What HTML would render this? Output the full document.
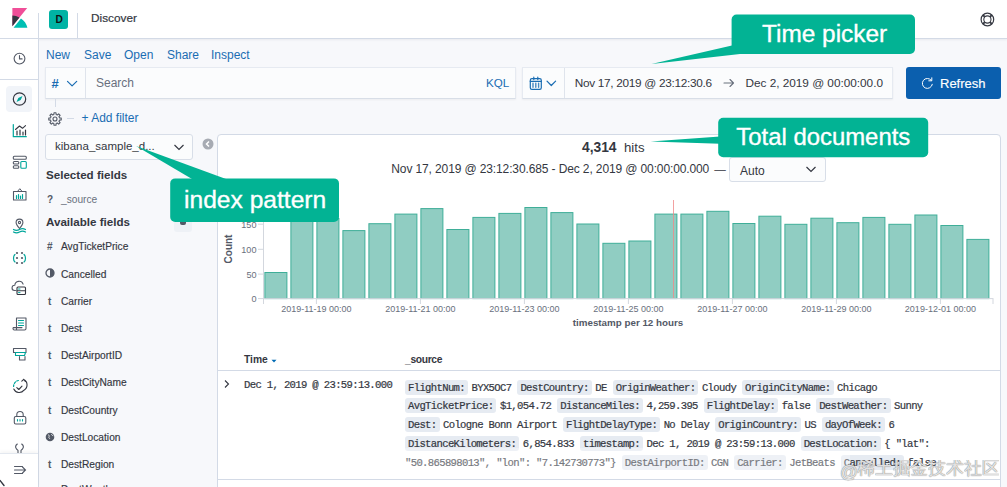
<!DOCTYPE html>
<html><head><meta charset="utf-8">
<style>
*{box-sizing:border-box;margin:0;padding:0}
html,body{width:1007px;height:487px;overflow:hidden}
body{position:relative;background:#f7f8fb;font-family:"Liberation Sans",sans-serif;color:#343741}
.a{position:absolute}
.t{position:absolute;white-space:nowrap;line-height:1}
#hdr{left:0;top:0;width:1007px;height:39px;background:#fff;border-bottom:1px solid #d3dae6;box-shadow:0 1px 2px rgba(60,70,90,.08)}
#nav{left:0;top:39px;width:39px;height:448px;background:#fff;border-right:1px solid #d3dae6}
.vsep{position:absolute;top:13px;width:1px;height:26px;background:#d3dae6}
.lnk{color:#1a6db3;font-size:12px}
.box{position:absolute;background:#fbfcfd;border:1px solid #e6eaf1;border-bottom-color:#d8dee7;box-shadow:0 1px 2px rgba(0,0,0,.05)}
.mono{font-family:"Liberation Mono",monospace}
.co{-webkit-text-stroke:0.35px #fff}
.callout{position:absolute;background:#00b091;border-radius:5px;color:#fff;font-family:"Liberation Sans",sans-serif}
</style></head><body>
<!-- header -->
<div id="hdr" class="a">
  <svg class="a" style="left:10.1px;top:8px" width="19" height="20.3" viewBox="0 0 32 32" preserveAspectRatio="none">
    <path fill="#F04E98" d="M4 0v28.789L28.935.017z"/>
    <path fill="#343741" d="M4 12v16.789l11.906-13.738A24.721 24.721 0 004 12"/>
    <path fill="#00BFB3" d="M18.479 16.664L6.268 30.754l-.377.435h23.45c-1.24-6.28-5.9-11.35-10.862-14.525"/>
  </svg>
  <div class="vsep" style="left:38px"></div>
  <div class="a" style="left:49px;top:10px;width:19px;height:19px;background:#00b3a4;border-radius:3px"></div>
  <div class="t" style="left:55.4px;top:15.4px;font-size:10.2px;font-weight:bold;color:#111">D</div>
  <div class="vsep" style="left:77px"></div>
  <div class="t" style="left:91px;top:13.2px;font-size:11.8px;color:#343741;-webkit-text-stroke:0.2px #343741">Discover</div>
</div>
<!-- left nav -->
<div id="nav" class="a"></div>
<div class="a" style="left:0;top:78.6px;width:38px;height:1px;background:#d3dae6"></div>
<div class="a" style="left:6px;top:86px;width:26px;height:26px;background:#f1f4f9;border-radius:4px"></div>
<svg class="a" style="left:0;top:39px" width="38" height="448" viewBox="0 39 38 448" fill="none" stroke-linecap="round" stroke-linejoin="round">
 <!-- clock -->
 <g stroke="#535966" stroke-width="1.1"><circle cx="19.5" cy="58.6" r="5.4"/><path d="M19.5 55.5v3.4h2.6"/></g>
 <!-- compass -->
 <g stroke="#343741" stroke-width="1.2"><circle cx="19.5" cy="99" r="6.2"/></g>
 <path d="M22.5 96 L18.3 98 L16.5 102 L20.7 100z" fill="#00a69b"/>
 <!-- visualize -->
 <path d="M13.3 124.5v12.2h13" stroke="#00a69b" stroke-width="1.2"/>
 <path d="M15.5 129.5l4-3.5 3 2.3 3-2.6" stroke="#343741" stroke-width="1.1"/>
 <g stroke="#343741" stroke-width="1.2"><path d="M17 131v4M20 130v5M23 132v3M25.5 130v5"/></g>
 <!-- dashboard -->
 <g stroke="#535966" stroke-width="1.1"><rect x="13.3" y="156.3" width="13" height="3" rx="1"/><rect x="13.3" y="161.5" width="5.5" height="2.5" rx="1"/><rect x="13.3" y="165.8" width="5.5" height="2.5" rx="1"/></g>
 <rect x="20.8" y="161.5" width="5.5" height="6.8" rx="1" stroke="#00a69b" stroke-width="1.1"/>
 <!-- canvas -->
 <path d="M13.5 191.5h12.5v8.5h-12.5z" stroke="#535966" stroke-width="1.1"/>
 <path d="M17.5 191.5l2.3-2.8 2.3 2.8" stroke="#535966" stroke-width="1"/>
 <g stroke="#00a69b" stroke-width="1.2"><path d="M16.5 195.5v3M18.5 194.5v4M20.5 196v2.5M22.5 194.5v4"/></g>
 <!-- maps -->
 <g stroke="#535966" stroke-width="1.1"><path d="M19.5 228.5c-2.2-2.6-3.4-4.3-3.4-6a3.4 3.4 0 0 1 6.8 0c0 1.7-1.2 3.4-3.4 6z"/><circle cx="19.5" cy="222.5" r="1.1"/></g>
 <g stroke="#00a69b" stroke-width="1.2"><path d="M13.5 229.5c2 1.2 4 1.2 6 0s4-1.2 6 0M13.5 232c2 1.2 4 1.2 6 0s4-1.2 6 0"/></g>
 <!-- ml -->
 <g fill="#535966" stroke="none"><circle cx="17" cy="253" r="1.1"/><circle cx="22" cy="253" r="1.1"/><circle cx="17" cy="258" r="1.1"/><circle cx="22" cy="258" r="1.1"/><circle cx="17" cy="263" r="1.1"/><circle cx="22" cy="263" r="1.1"/></g>
 <g stroke="#00a69b" stroke-width="1.2"><path d="M15 254.5c-2 1.5-2 6 0 7.5M24 254.5c2 1.5 2 6 0 7.5"/></g>
 <!-- infra -->
 <path d="M15.5 290.5h-1a2.6 2.6 0 0 1 .3-5.2 4.3 4.3 0 0 1 8.3-1.2" stroke="#535966" stroke-width="1.1"/>
 <rect x="17" y="287" width="8.5" height="7.5" rx="1" stroke="#343741" stroke-width="1.1"/>
 <path d="M17 290.8h8.5" stroke="#343741" stroke-width="1.1"/><path d="M18.5 289h1.5M18.5 292.6h1.5" stroke="#00a69b" stroke-width="1"/>
 <!-- logs -->
 <path d="M16.5 329.5v-11.5h9.5v10.5a1.5 1.5 0 0 1-1.5 1.5h-10a1.5 1.5 0 0 1-1.2-2.4h8.7" stroke="#535966" stroke-width="1.1"/>
 <g stroke="#00a69b" stroke-width="1.1"><path d="M18.5 320.5h5M18.5 323h5M18.5 325.5h5"/></g>
 <!-- apm -->
 <path d="M15.5 352.5h-2v-4h12.5v4h-2" stroke="#535966" stroke-width="1.1"/>
 <path d="M15.5 352.5h10l-1 3h-9z" stroke="#00a69b" stroke-width="1.1"/>
 <path d="M19.5 356.5v3.5h5.5v-3.5" stroke="#535966" stroke-width="1.1"/>
 <!-- uptime -->
 <path d="M13.6 386.5a6 6 0 0 1 4.8-6" stroke="#00a69b" stroke-width="1.2" stroke-dasharray="1.8 1.4"/>
 <path d="M16.8 387.6l2 1.9 3.2-3.4" stroke="#343741" stroke-width="1.1"/>
 <path d="M13.8 389a6 6 0 0 0 10.2 1.2a6 6 0 0 0 -.3-10.6M23.7 379.3l-1.9 1.8M23.7 379.3l1.6 2" stroke="#343741" stroke-width="1.1"/>
 <!-- siem lock -->
 <rect x="14.3" y="416.5" width="11.5" height="7.5" rx="1.5" stroke="#535966" stroke-width="1.1"/>
 <path d="M16.8 416.5v-1.8a3.2 3.2 0 0 1 6.4 0v1.8" stroke="#535966" stroke-width="1.1"/>
 <g stroke="#00a69b" stroke-width="1.1"><path d="M17.5 419.5v1.5M20 419.5v1.5M22.5 419.5v1.5"/></g>
 <!-- dev tools -->
 <path d="M17.3 444c-1.6 1.2-2 3.4-.8 5l1.5 1.3v4M21.7 444c1.6 1.2 2 3.4.8 5l-1.5 1.3v4" stroke="#535966" stroke-width="1.1"/>
</svg>
<div class="a" style="left:0;top:453px;width:38px;height:34px;background:#fff;border-top:1px solid #e3e8ef;box-shadow:0 -2px 3px rgba(0,0,0,.04)"></div>
<svg class="a" style="left:0;top:453px" width="38" height="34" viewBox="0 453 38 34" fill="none" stroke="#535966" stroke-width="1.1" stroke-linecap="round">
 <path d="M14.5 466.5h8M14.5 470h10.5M14.5 473.5h8M22.5 467l3 3-3 3"/>
 <path d="M0 480.5l4 5" stroke="#343741" stroke-width="1.4"/>
</svg>

<!-- top menu -->
<div class="t lnk" style="left:46px;top:49px">New</div>
<div class="t lnk" style="left:84px;top:49px">Save</div>
<div class="t lnk" style="left:124px;top:49px">Open</div>
<div class="t lnk" style="left:167px;top:49px">Share</div>
<div class="t lnk" style="left:211px;top:49px">Inspect</div>

<!-- search -->
<div class="box" style="left:45px;top:67px;width:471px;height:32px"></div>
<div class="a" style="left:85px;top:68px;width:1px;height:30px;background:#dfe4ec"></div>
<div class="t lnk" style="left:51.5px;top:76.5px;font-size:13px;font-weight:bold">#</div>
<div class="t" style="left:96px;top:77px;font-size:12px;color:#69707d">Search</div>
<div class="t lnk" style="left:486px;top:77px;font-size:11.6px">KQL</div>

<!-- date picker -->
<div class="box" style="left:522px;top:67px;width:371px;height:32px"></div>
<div class="a" style="left:564px;top:68px;width:1px;height:30px;background:#dfe4ec"></div>
<div class="t" style="left:574.8px;top:77.6px;font-size:11.8px;letter-spacing:-0.3px">Nov 17, 2019 @ 23:12:30.6</div>

<div class="t" style="left:745.5px;top:77.6px;font-size:11.8px;letter-spacing:-0.02px">Dec 2, 2019 @ 00:00:00.0</div>

<!-- refresh -->
<div class="a" style="left:906px;top:67px;width:95px;height:32px;background:#0b5fae;border-radius:3px"></div>
<div class="t" style="left:940px;top:77px;font-size:13px;color:#fff;-webkit-text-stroke:0.15px #fff">Refresh</div>

<!-- filter row -->
<div class="a" style="left:55px;top:99px;width:1px;height:8px;background:#d3dae6"></div>
<svg class="a" style="left:46.7px;top:110.5px" width="16" height="16" viewBox="0 0 16 16" fill="none" stroke="#535966" stroke-width="1.1" stroke-linejoin="round"><path d="M14.22 7.01 L14.22 8.99 L12.46 9.14 L11.96 10.34 L13.10 11.70 L11.70 13.10 L10.34 11.96 L9.14 12.46 L8.99 14.22 L7.01 14.22 L6.86 12.46 L5.66 11.96 L4.30 13.10 L2.90 11.70 L4.04 10.34 L3.54 9.14 L1.78 8.99 L1.78 7.01 L3.54 6.86 L4.04 5.66 L2.90 4.30 L4.30 2.90 L5.66 4.04 L6.86 3.54 L7.01 1.78 L8.99 1.78 L9.14 3.54 L10.34 4.04 L11.70 2.90 L13.10 4.30 L11.96 5.66 L12.46 6.86z"/><circle cx="8" cy="8" r="2"/></svg>
<div class="a" style="left:66.5px;top:118px;width:7.5px;height:1px;background:#d3dae6"></div>
<div class="t lnk" style="left:81.5px;top:111.5px">+ Add filter</div>

<!-- index pattern select -->
<div class="a" style="left:45px;top:134px;width:148px;height:26px;background:#fbfcfd;border:1px solid #d8dee8;border-radius:3px"></div>
<div class="t" style="left:55px;top:140.5px;font-size:11.5px">kibana_sample_d...</div>
<svg class="a" style="left:173px;top:141px" width="12" height="12" viewBox="0 0 12 12" fill="none" stroke="#343741" stroke-width="1.2"><path d="M1.5 4l4.5 4.5 4.5-4.5"/></svg>
<svg class="a" style="left:202px;top:137.5px" width="12" height="12" viewBox="0 0 12 12"><circle cx="6" cy="6" r="5.5" fill="#a7abb3"/><path d="M7 3.5L4.5 6 7 8.5" fill="none" stroke="#fff" stroke-width="1.5"/></svg>

<div class="t" style="left:46px;top:168.5px;font-size:11.6px;font-weight:bold">Selected fields</div>
<div class="t" style="left:47px;top:195px;font-size:10px;font-weight:bold;color:#535966">?</div>
<div class="t" style="left:61px;top:195px;font-size:10.2px;color:#69707d">_source</div>
<div class="t" style="left:46px;top:216px;font-size:11.6px;font-weight:bold">Available fields</div>
<div class="a" style="left:174px;top:214px;width:18px;height:18px;background:#eef1f6;border-radius:3px"></div>
<div class="a" style="left:179.5px;top:222px;width:6px;height:3px;background:#535966;border-radius:0 0 2px 2px"></div>

<div class="t" style="left:47px;top:242px;font-size:10px;font-weight:bold;color:#535966">#</div>
<div class="t" style="left:61px;top:242px;font-size:10.2px;-webkit-text-stroke:0.15px #343741">AvgTicketPrice</div>
<svg class="a" style="left:45px;top:268px" width="10" height="10" viewBox="0 0 10 10"><circle cx="5" cy="5" r="4" fill="none" stroke="#535966" stroke-width="1.3"/><path d="M5 1a4 4 0 0 1 0 8z" fill="#535966"/></svg>
<div class="t" style="left:61px;top:270px;font-size:10.2px;-webkit-text-stroke:0.15px #343741">Cancelled</div>
<div class="t" style="left:48px;top:297px;font-size:10px;font-weight:bold;color:#535966">t</div>
<div class="t" style="left:61px;top:297px;font-size:10.2px;-webkit-text-stroke:0.15px #343741">Carrier</div>
<div class="t" style="left:48px;top:324px;font-size:10px;font-weight:bold;color:#535966">t</div>
<div class="t" style="left:61px;top:324px;font-size:10.2px;-webkit-text-stroke:0.15px #343741">Dest</div>
<div class="t" style="left:48px;top:351px;font-size:10px;font-weight:bold;color:#535966">t</div>
<div class="t" style="left:61px;top:351px;font-size:10.2px;-webkit-text-stroke:0.15px #343741">DestAirportID</div>
<div class="t" style="left:48px;top:378px;font-size:10px;font-weight:bold;color:#535966">t</div>
<div class="t" style="left:61px;top:378px;font-size:10.2px;-webkit-text-stroke:0.15px #343741">DestCityName</div>
<div class="t" style="left:48px;top:406px;font-size:10px;font-weight:bold;color:#535966">t</div>
<div class="t" style="left:61px;top:406px;font-size:10.2px;-webkit-text-stroke:0.15px #343741">DestCountry</div>
<svg class="a" style="left:45px;top:432px" width="10" height="10" viewBox="0 0 10 10"><circle cx="5" cy="5" r="4.3" fill="#535966"/><path d="M3 2.5c1 .5 1.5 1.5 1 2.5-.5.8.5 1.3 1 2M6.5 2c0 1 .8 1.5 1.8 1.8" stroke="#fff" stroke-width=".8" fill="none"/></svg>
<div class="t" style="left:61px;top:433px;font-size:10.2px;-webkit-text-stroke:0.15px #343741">DestLocation</div>
<div class="t" style="left:48px;top:460px;font-size:10px;font-weight:bold;color:#535966">t</div>
<div class="t" style="left:61px;top:460px;font-size:10.2px;-webkit-text-stroke:0.15px #343741">DestRegion</div>
<div class="t" style="left:48px;top:487px;font-size:10px;font-weight:bold;color:#535966">t</div>
<div class="t" style="left:61px;top:485px;font-size:10.2px;-webkit-text-stroke:0.15px #343741">DestWeather</div>

<!-- chart panel -->
<div class="a" style="left:217px;top:134px;width:784px;height:360px;background:#fff;border:1px solid #d3dae6;border-radius:4px"></div>

<div class="t" style="left:582px;top:140.5px;font-size:13.8px;font-weight:bold">4,314</div>
<div class="t" style="left:624px;top:140.5px;font-size:13.2px">hits</div>
<div class="t" style="left:391.3px;top:163px;font-size:12px;letter-spacing:-0.12px">Nov 17, 2019 @ 23:12:30.685 - Dec 2, 2019 @ 00:00:00.000</div><div class="t" style="left:714.3px;top:163px;font-size:11.6px">&#8212;</div>
<div class="a" style="left:729px;top:157px;width:97px;height:25px;background:#fbfcfd;border:1px solid #d8dee8;border-radius:3px"></div>
<div class="t" style="left:740px;top:164.8px;font-size:12px">Auto</div>
<svg class="a" style="left:805px;top:163px" width="12" height="12" viewBox="0 0 12 12" fill="none" stroke="#343741" stroke-width="1.2"><path d="M1.5 4l4.5 4.5 4.5-4.5"/></svg>
<svg class="a" style="left:0;top:0" width="1007" height="487" viewBox="0 0 1007 487">
 <g fill="#90cdc2" stroke="#3fae98" stroke-width="1">
<rect x="264.9" y="272.5" width="22" height="26.1"/>
<rect x="290.9" y="215.0" width="22" height="83.6"/>
<rect x="316.9" y="218.5" width="22" height="80.1"/>
<rect x="342.9" y="230.6" width="22" height="68.0"/>
<rect x="368.9" y="223.7" width="22" height="74.9"/>
<rect x="394.9" y="214.1" width="22" height="84.5"/>
<rect x="420.9" y="208.6" width="22" height="90.0"/>
<rect x="446.9" y="229.5" width="22" height="69.1"/>
<rect x="472.9" y="217.4" width="22" height="81.2"/>
<rect x="498.9" y="213.4" width="22" height="85.2"/>
<rect x="524.9" y="207.5" width="22" height="91.1"/>
<rect x="550.9" y="212.6" width="22" height="86.0"/>
<rect x="576.9" y="224.0" width="22" height="74.6"/>
<rect x="602.9" y="243.3" width="22" height="55.3"/>
<rect x="628.9" y="241.0" width="22" height="57.6"/>
<rect x="654.9" y="214.1" width="22" height="84.5"/>
<rect x="680.9" y="214.1" width="22" height="84.5"/>
<rect x="706.9" y="211.3" width="22" height="87.3"/>
<rect x="732.9" y="223.5" width="22" height="75.1"/>
<rect x="758.9" y="216.2" width="22" height="82.4"/>
<rect x="784.9" y="224.3" width="22" height="74.3"/>
<rect x="810.9" y="218.2" width="22" height="80.4"/>
<rect x="836.9" y="222.7" width="22" height="75.9"/>
<rect x="862.9" y="217.4" width="22" height="81.2"/>
<rect x="888.9" y="224.3" width="22" height="74.3"/>
<rect x="914.9" y="215.0" width="22" height="83.6"/>
<rect x="940.9" y="225.5" width="22" height="73.1"/>
<rect x="966.9" y="239.4" width="22" height="59.2"/>
 </g>
 <path d="M673.5 200v98.6" stroke="#f08a8a" stroke-width="1" opacity=".8"/>
 <g stroke="#d3d7de" stroke-width="1" fill="none">
 <path d="M263.5 200v104M263.5 298.6h730M258 298.6h5.5M258 274.1h5.5M258 249.3h5.5M258 224.2h5.5M993 299v5"/>
<path d="M316.4 299v5"/>
<path d="M420.4 299v5"/>
<path d="M524.4 299v5"/>
<path d="M628.4 299v5"/>
<path d="M732.4 299v5"/>
<path d="M836.4 299v5"/>
<path d="M940.4 299v5"/>
 </g>
 <g font-family="Liberation Sans" font-size="9.1" fill="#69707d" text-anchor="end">
  <text x="256.5" y="302">0</text><text x="256.5" y="277.5">50</text><text x="256.5" y="252.7">100</text><text x="256.5" y="227.6">150</text>
 </g>
 <g font-family="Liberation Sans" font-size="9" fill="#69707d" text-anchor="middle">
<text x="316.4" y="312">2019-11-19 00:00</text>
<text x="420.4" y="312">2019-11-21 00:00</text>
<text x="524.4" y="312">2019-11-23 00:00</text>
<text x="628.4" y="312">2019-11-25 00:00</text>
<text x="732.4" y="312">2019-11-27 00:00</text>
<text x="836.4" y="312">2019-11-29 00:00</text>
<text x="940.4" y="312">2019-12-01 00:00</text>
 </g>
 <text x="628" y="325.5" font-family="Liberation Sans" font-size="9.8" font-weight="bold" fill="#535966" text-anchor="middle">timestamp per 12 hours</text>
 <text transform="translate(232 249) rotate(-90)" font-family="Liberation Sans" font-size="10" font-weight="bold" fill="#535966" text-anchor="middle">Count</text>
</svg>

<style>
.srow{position:absolute;left:405px;height:15px;white-space:nowrap;font-family:"Liberation Mono",monospace;font-size:10.6px;letter-spacing:-0.66px;line-height:15px;color:#343741;-webkit-text-stroke:0.2px #343741}
.srow span{display:inline-block;height:15px;line-height:16.6px;vertical-align:top}
.srow .k{background:#e6ebf2;border-radius:3px;padding:0 3px 0 3px;margin-right:3.5px}
.srow .v{margin-right:6px}
</style>
<div class="t" style="left:244px;top:354.6px;font-size:10.3px;font-weight:bold">Time</div>
<svg class="a" style="left:269.5px;top:357.5px" width="8" height="6" viewBox="0 0 8 6"><path d="M1.5 1.8h5L4 4.6z" fill="#006bb4"/></svg>
<div class="t" style="left:405px;top:354.6px;font-size:10.3px;font-weight:bold;letter-spacing:-0.35px">_source</div>
<div class="a" style="left:218px;top:370px;width:782px;height:1px;background:#d3dae6"></div>
<svg class="a" style="left:222px;top:378px" width="10" height="12" viewBox="0 0 10 12" fill="none" stroke="#343741" stroke-width="1.1"><path d="M3 2.5l3.5 3.5-3.5 3.5"/></svg>
<div class="t mono" style="left:244px;top:380px;font-size:10.6px;letter-spacing:-0.66px;-webkit-text-stroke:0.2px #343741">Dec 1, 2019 @ 23:59:13.000</div>
<div class="srow" style="top:379.50px"><span class="k">FlightNum:</span><span class="v">BYX5OC7</span><span class="k">DestCountry:</span><span class="v">DE</span><span class="k">OriginWeather:</span><span class="v">Cloudy</span><span class="k">OriginCityName:</span><span class="v">Chicago</span></div>
<div class="srow" style="top:398.45px"><span class="k">AvgTicketPrice:</span><span class="v">$1,054.72</span><span class="k">DistanceMiles:</span><span class="v">4,259.395</span><span class="k">FlightDelay:</span><span class="v">false</span><span class="k">DestWeather:</span><span class="v">Sunny</span></div>
<div class="srow" style="top:417.40px"><span class="k">Dest:</span><span class="v">Cologne Bonn Airport</span><span class="k">FlightDelayType:</span><span class="v">No Delay</span><span class="k">OriginCountry:</span><span class="v">US</span><span class="k">dayOfWeek:</span><span class="v">6</span></div>
<div class="srow" style="top:436.35px"><span class="k">DistanceKilometers:</span><span class="v">6,854.833</span><span class="k">timestamp:</span><span class="v">Dec 1, 2019 @ 23:59:13.000</span><span class="k">DestLocation:</span><span class="v">{ "lat":</span></div>
<div class="srow" style="top:455.30px"><span class="v">"50.865898013", "lon": "7.142730773"}</span><span class="k">DestAirportID:</span><span class="v">CGN</span><span class="k">Carrier:</span><span class="v">JetBeats</span><span class="k">Cancelled:</span><span class="v">false</span></div>

<div class="a" style="left:218px;top:479px;width:782px;height:1px;background:#d3dae6"></div>


<div class="a" style="left:405px;top:448px;width:445px;height:28px;background:rgba(255,255,255,.33)"></div>
<!-- extra icons -->
<svg class="a" style="left:978px;top:10px" width="19" height="19" viewBox="0 0 19 19" fill="none" stroke="#343741">
 <circle cx="9.4" cy="9.5" r="6.3" stroke-width="1.2"/><circle cx="9.4" cy="9.5" r="3.6" stroke-width="1.1"/>
 <path d="M12.02 12.12L13.71 13.81M6.78 12.12L5.09 13.81M6.78 6.88L5.09 5.19M12.02 6.88L13.71 5.19" stroke-width="1.9"/>
</svg>
<svg class="a" style="left:528px;top:76px" width="32" height="15" viewBox="0 0 32 15" fill="none" stroke="#1a6db3" stroke-linecap="round" stroke-linejoin="round">
 <rect x="2.3" y="2.6" width="11" height="10.8" rx="1.6" stroke-width="1.2"/>
 <path d="M2.3 5.4h11M5.8 1.2v2.4M9.8 1.2v2.4" stroke-width="1.2"/>
 <path d="M5 7.3v4M7.8 7.3v4M10.6 7.3v4" stroke-width="1.4" opacity=".8"/>
 <path d="M19 5.2l4.3 4.3 4.3-4.3" stroke-width="1.2"/>
</svg>
<svg class="a" style="left:64px;top:77px" width="16" height="12" viewBox="0 0 16 12" fill="none" stroke="#1a6db3" stroke-linecap="round" stroke-linejoin="round">
 <path d="M3.5 4.3l4.6 4.6 4.6-4.6" stroke-width="1.2"/>
</svg>
<svg class="a" style="left:722px;top:77px" width="14" height="12" viewBox="0 0 14 12" fill="none" stroke="#69707d" stroke-linecap="round" stroke-linejoin="round">
 <path d="M2 6h9.5M8 2.5l3.5 3.5-3.5 3.5" stroke-width="1.1"/>
</svg>
<svg class="a" style="left:920px;top:76px" width="15" height="15" viewBox="0 0 15 15" fill="none" stroke="#fff" stroke-linecap="round" stroke-linejoin="round">
 <path d="M11.3 4.3a5 5 0 1 0 1 4" stroke-width="1"/>
 <path d="M11.8 1.8v3h-3" stroke-width="1"/>
</svg>

<!-- callouts -->
<svg class="a" style="left:0;top:0" width="1007" height="487" viewBox="0 0 1007 487">
 <g fill="#02b394">
  <rect x="731.6" y="14.5" width="183.4" height="39.5" rx="5"/>
  <path d="M733 45.3L651.5 64 740 54z"/>
  <rect x="718.2" y="117.8" width="210" height="39.5" rx="5"/>
  <path d="M720 136.4L650.6 141.5 720 143.8z"/>
  <rect x="170.2" y="178.4" width="168.8" height="43.6" rx="5"/>
  <path d="M192 179L136 146 226 179z"/>
 </g>
</svg>
<div class="t" style="left:762px;top:22px;font-size:24.4px;color:#fff;-webkit-text-stroke:0.35px #fff">Time picker</div>
<div class="t" style="left:736.3px;top:124.8px;font-size:23.9px;color:#fff;-webkit-text-stroke:0.35px #fff">Total documents</div>
<div class="t" style="left:184px;top:188px;font-size:24.6px;color:#fff;-webkit-text-stroke:0.35px #fff">index pattern</div>
<div class="t" style="left:840px;top:460px;font-size:17.5px;color:rgba(250,250,250,.8);text-shadow:0 0 1px #888,0 0 1px #888"><span style="display:inline-block;width:17px">@</span><span style="display:inline-block;width:17.8px;overflow:hidden;text-align:center">稀</span><span style="display:inline-block;width:17.8px;overflow:hidden;text-align:center">土</span><span style="display:inline-block;width:17.8px;overflow:hidden;text-align:center">掘</span><span style="display:inline-block;width:17.8px;overflow:hidden;text-align:center">金</span><span style="display:inline-block;width:17.8px;overflow:hidden;text-align:center">技</span><span style="display:inline-block;width:17.8px;overflow:hidden;text-align:center">术</span><span style="display:inline-block;width:17.8px;overflow:hidden;text-align:center">社</span><span style="display:inline-block;width:17.8px;overflow:hidden;text-align:center">区</span></div>

</body></html>
